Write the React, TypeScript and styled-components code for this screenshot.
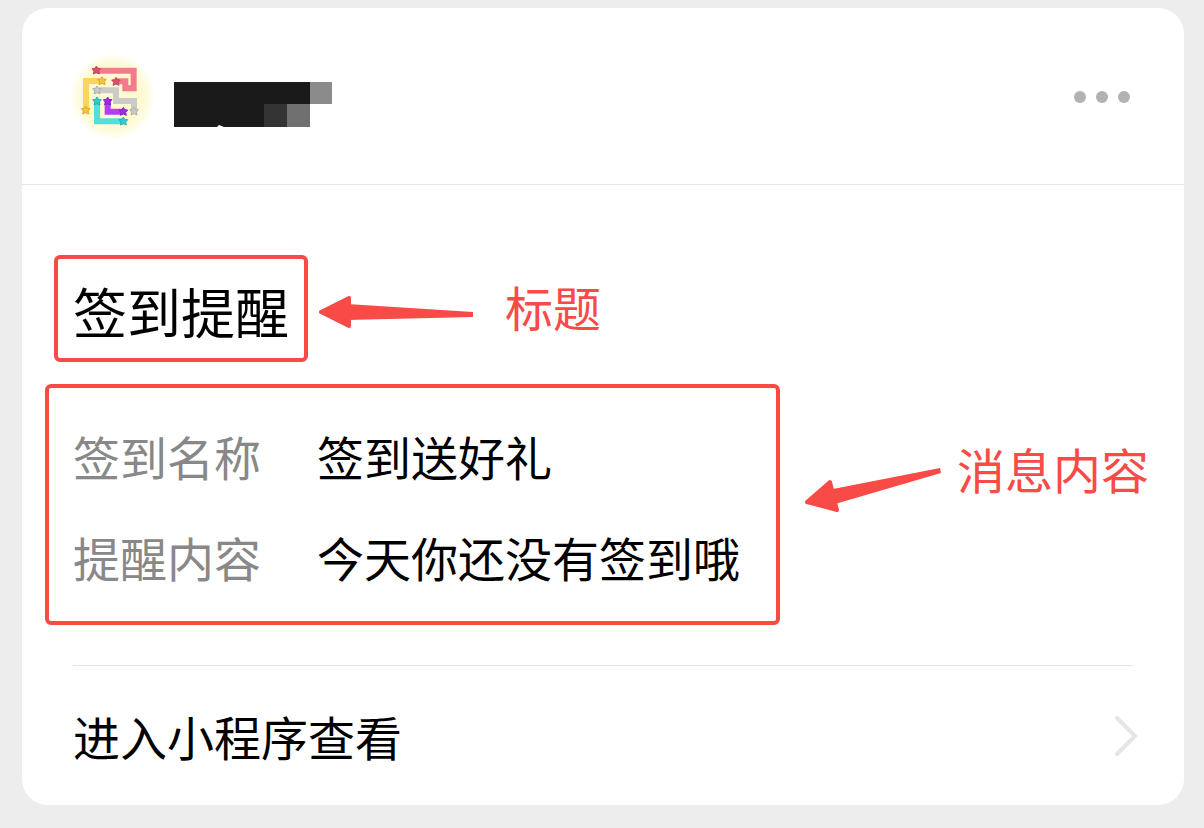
import React from "react";
import styled, { createGlobalStyle } from "styled-components";

const RED = "#f84b47";

const GlobalStyle = createGlobalStyle`
  *, *::before, *::after { box-sizing: border-box; }
  body {
    margin: 0;
    background: #ededed;
    color: #000;
    font-family: "Noto Sans CJK SC", sans-serif;
  }
`;

const Page = styled.main`
  padding: 8px 20px 23px 22px;
`;

const Card = styled.article`
  background: #fff;
  border-radius: 26px;
`;

const Header = styled.header`
  display: flex;
  align-items: center;
  gap: 4px;
  padding: 37px 52px 39px 38px;
  border-bottom: 1px solid #e4e4e4;
`;

const Avatar = styled.svg`
  flex: none;
  width: 110px;
  height: 100px;
`;

const MaskedName = styled.svg`
  flex: none;
  width: 158px;
  height: 45px;
  margin-top: 18px;
`;

const MoreButton = styled.button`
  display: flex;
  gap: 10px;
  margin: 4px 0 0 auto;
  padding: 2px;
  border: 0;
  background: none;
  cursor: pointer;
`;

const Dot = styled.span`
  width: 12px;
  height: 12px;
  border-radius: 50%;
  background: #b2b2b2;
`;

const Body = styled.section`
  display: flex;
  flex-direction: column;
  gap: 22px;
  padding: 70px 23px 40px;
`;

const Row = styled.div<{ $gap: number; $indent?: number }>`
  display: flex;
  align-items: flex-start;
  gap: ${(p) => p.$gap}px;
  padding-left: ${(p) => p.$indent ?? 0}px;
`;

const Frame = styled.div<{ $padding: string }>`
  flex: none;
  padding: ${(p) => p.$padding};
  border: 4px solid ${RED};
  border-radius: 6px;
`;

const Title = styled.h1`
  margin: 0;
  font-size: 54px;
  font-weight: 400;
  line-height: 60px;
`;

const Details = styled.dl`
  display: grid;
  grid-template-columns: auto auto;
  gap: 41px 56px;
  margin: 0;
  font-size: 47px;
  line-height: 60px;
`;

const Term = styled.dt`
  color: #888;
`;

const Value = styled.dd`
  margin: 0;
`;

const Callout = styled.div<{ $gap: number; $top: number }>`
  display: flex;
  align-items: flex-start;
  gap: ${(p) => p.$gap}px;
  padding-top: ${(p) => p.$top}px;
`;

const Arrow = styled.svg<{ $w: number; $h: number; $top: number }>`
  flex: none;
  width: ${(p) => p.$w}px;
  height: ${(p) => p.$h}px;
  margin-top: ${(p) => p.$top}px;
  fill: ${RED};
  stroke: ${RED};
  stroke-linejoin: round;
`;

const CalloutText = styled.span`
  color: ${RED};
  font-size: 48px;
  line-height: 48px;
  white-space: nowrap;
`;

const Footer = styled.footer`
  margin: 0 51px;
  border-top: 1px solid #e4e4e4;
`;

const EnterLink = styled.a`
  display: flex;
  align-items: center;
  justify-content: space-between;
  height: 139px;
  color: inherit;
  font-size: 47px;
  line-height: 60px;
  text-decoration: none;
`;

const Chevron = styled.svg`
  width: 26px;
  height: 44px;
  margin-right: -6px;
`;

const STARS: [number, number, string, string][] = [
  [109, 75, "#d8506a", "#c4455f"],
  [168, 109, "#d8506a", "#c4455f"],
  [126, 107, "#f5c33c", "#dba93a"],
  [77, 195, "#f5c33c", "#dba93a"],
  [111, 135, "#c9c9c5", "#b0b0ac"],
  [222, 198, "#c9c9c5", "#b0b0ac"],
  [111, 168, "#35c9c8", "#2bb2b3"],
  [190, 228, "#35c9c8", "#2bb2b3"],
  [143, 168, "#a12be0", "#8a25c6"],
  [190, 199, "#a12be0", "#8a25c6"],
];

const STAR_POINTS = "0,-12 4,-5 13,-4 7,3 9,12 0,8 -9,12 -7,3 -13,-4 -4,-5";

function AppAvatar() {
  return (
    <Avatar viewBox="0 0 330 300" role="img" aria-label="小程序图标">
      <defs>
        <radialGradient id="glow">
          <stop offset="0" stopColor="#fffad6" />
          <stop offset="0.65" stopColor="#fff9cf" />
          <stop offset="0.85" stopColor="#fffce4" />
          <stop offset="1" stopColor="#fff" />
        </radialGradient>
      </defs>
      <ellipse cx="158" cy="154" rx="128" ry="130" fill="url(#glow)" />
      <g fill="none" strokeWidth="18">
        <path d="M109 77H221V130H196V109H168" stroke="#f47b8c" />
        <path d="M126 108H78V195" stroke="#fbd45c" />
        <path d="M111 136H168V168H222V198" stroke="#cbcbc9" />
        <path d="M111 168V229H190" stroke="#4fe0dc" />
        <path d="M143 168V200H190" stroke="#b23df2" />
      </g>
      {STARS.map(([x, y, fill, edge]) => (
        <polygon
          key={`${x}-${y}`}
          points={STAR_POINTS}
          transform={`translate(${x} ${y})`}
          fill={fill}
          stroke={edge}
          strokeWidth="3"
          strokeLinejoin="round"
        />
      ))}
    </Avatar>
  );
}

export default function App() {
  return (
    <>
      <GlobalStyle />
      <Page>
        <Card>
          <Header>
            <AppAvatar />
            <MaskedName viewBox="0 0 158 45" aria-hidden="true">
              <path d="M0 0H136V45H0Z" fill="#1a1a1a" />
              <path d="M136 0H158V22H136Z" fill="#8b8b8b" />
              <path d="M90 22H113V45H90Z" fill="#333" />
              <path d="M113 22H136V45H113Z" fill="#707070" />
              <path d="M43 45L45 43L50 45Z" fill="#fff" />
            </MaskedName>
            <MoreButton type="button" aria-label="更多">
              <Dot />
              <Dot />
              <Dot />
            </MoreButton>
          </Header>

          <Body>
            <Row $gap={11} $indent={9}>
              <Frame $padding="22px 15px 17px">
                <Title>签到提醒</Title>
              </Frame>
              <Callout $gap={32} $top={27}>
                <Arrow $w={154} $h={34} $top={13} viewBox="0 0 154 34" aria-hidden="true">
                  <path d="M2 17L30 3L30 31Z" strokeWidth="4" />
                  <path d="M28 9L154 17V22L28 25Z" stroke="none" />
                </Arrow>
                <CalloutText>标题</CalloutText>
              </Callout>
            </Row>

            <Row $gap={25}>
              <Frame $padding="38px 36px 34px 24px">
                <Details>
                  <Term>签到名称</Term>
                  <Value>签到送好礼</Value>
                  <Term>提醒内容</Term>
                  <Value>今天你还没有签到哦</Value>
                </Details>
              </Frame>
              <Callout $gap={16} $top={60}>
                <Arrow $w={136} $h={45} $top={24} viewBox="0 0 136 45" aria-hidden="true">
                  <path d="M2 34L25 14L32 42Z" strokeWidth="4" />
                  <path d="M28 21L135 0L136 5L30 36Z" stroke="none" />
                </Arrow>
                <CalloutText>消息内容</CalloutText>
              </Callout>
            </Row>
          </Body>

          <Footer>
            <EnterLink href="#">
              进入小程序查看
              <Chevron viewBox="0 0 26 44" aria-hidden="true">
                <path
                  d="M4 4L22 22L4 40"
                  fill="none"
                  stroke="#e5e5e5"
                  strokeWidth="4"
                  strokeLinecap="round"
                />
              </Chevron>
            </EnterLink>
          </Footer>
        </Card>
      </Page>
    </>
  );
}
